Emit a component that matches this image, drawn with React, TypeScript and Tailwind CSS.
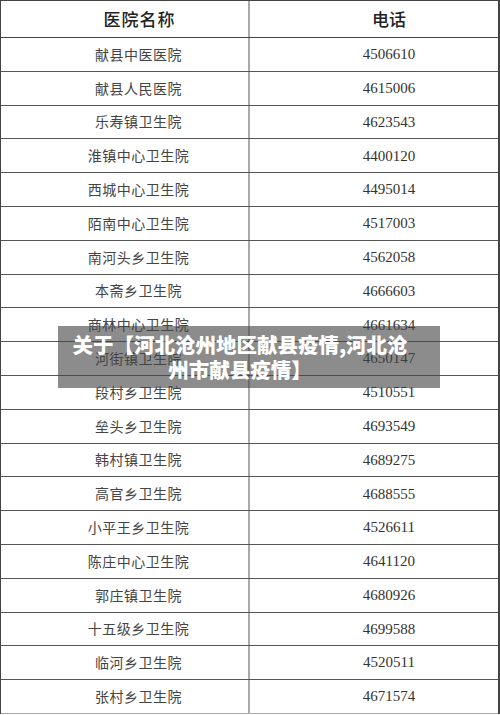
const rows: [string, string][] = [
  ['献县中医医院', '4506610'],
  ['献县人民医院', '4615006'],
  ['乐寿镇卫生院', '4623543'],
  ['淮镇中心卫生院', '4400120'],
  ['西城中心卫生院', '4495014'],
  ['陌南中心卫生院', '4517003'],
  ['南河头乡卫生院', '4562058'],
  ['本斋乡卫生院', '4666603'],
  ['商林中心卫生院', '4661634'],
  ['河街镇卫生院', '4650147'],
  ['段村乡卫生院', '4510551'],
  ['垒头乡卫生院', '4693549'],
  ['韩村镇卫生院', '4689275'],
  ['高官乡卫生院', '4688555'],
  ['小平王乡卫生院', '4526611'],
  ['陈庄中心卫生院', '4641120'],
  ['郭庄镇卫生院', '4680926'],
  ['十五级乡卫生院', '4699588'],
  ['临河乡卫生院', '4520511'],
  ['张村乡卫生院', '4671574'],
]

export default function App() {
  return (
    <div className="relative w-[500px] h-[715px] bg-white overflow-hidden font-['Noto_Sans_CJK_SC',sans-serif]">
      <div className="w-[500px] border-l border-r-2 border-[#444]">
        <div className="flex h-[38px] border-t border-b border-[#444]">
          <div className="w-[249px] border-r-2 border-[#aaa] flex items-center justify-center pl-[30px] text-[17px] font-medium text-[#222] tracking-[1px]">
            医院名称
          </div>
          <div className="flex-1 flex items-center justify-center pl-[30px] text-[17px] font-medium text-[#222]">
            电话
          </div>
        </div>
        {rows.map(([name, phone], i) => (
          <div
            key={name}
            className={`flex h-[33.8px] border-b ${i === rows.length - 1 ? 'border-[#aaa]' : 'border-[#555]'}`}
          >
            <div className="w-[249px] border-r-2 border-[#aaa] flex items-center justify-center pl-[28px] text-[14px] text-[#444] tracking-[0.5px]">
              {name}
            </div>
            <div className="flex-1 flex items-center justify-center pl-[30px] text-[15px] text-[#333] font-['Liberation_Serif',serif]">
              {phone}
            </div>
          </div>
        ))}
      </div>

      <div className="absolute left-[58px] top-[326px] w-[382px] h-[62px] bg-[rgba(70,70,70,0.62)] flex flex-col items-center justify-center pr-[18px] text-white font-black text-[20.5px] leading-[25px] text-center">
        <div>关于【河北沧州地区献县疫情,河北沧</div>
        <div>州市献县疫情】</div>
      </div>
    </div>
  )
}
